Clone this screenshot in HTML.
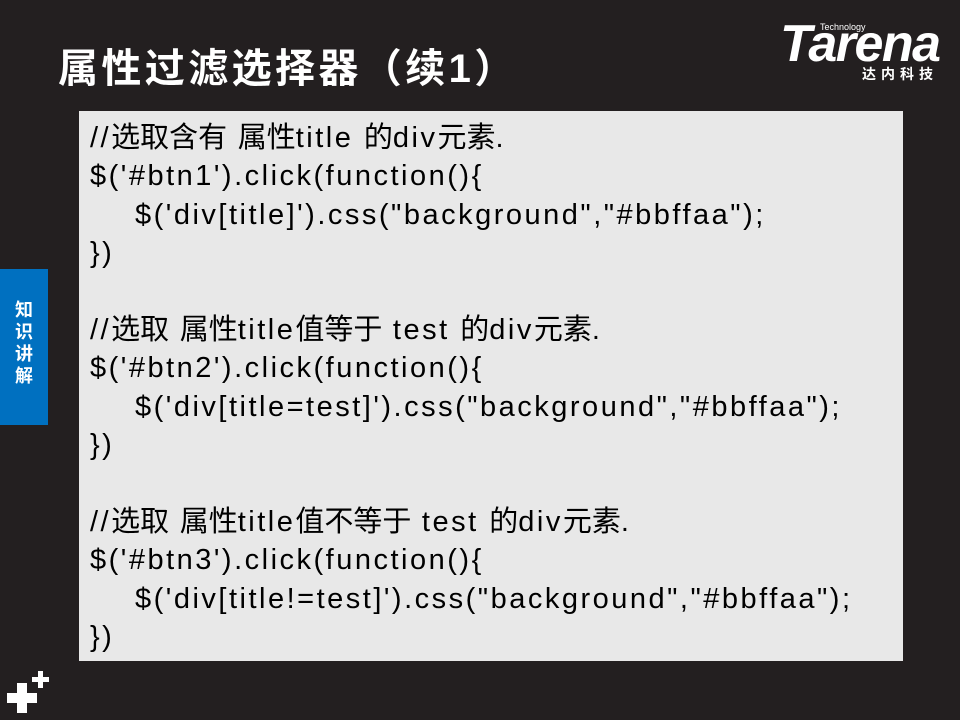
<!DOCTYPE html>
<html><head><meta charset="utf-8"><style>
body{margin:0;width:960px;height:720px;background:#231f20;position:relative;overflow:hidden;font-family:"Liberation Sans","Noto Sans CJK SC",sans-serif;}
.title{position:absolute;left:58px;top:36px;color:#fff;font-size:40px;font-weight:bold;letter-spacing:3.4px;}
.logo{position:absolute;left:780px;top:18px;color:#fff;}
.logo .t{font-size:52px;font-weight:bold;font-style:italic;letter-spacing:-1.5px;line-height:52px;}
.logo .tech{position:absolute;left:40px;top:4px;font-size:9px;}
.logo .cn{position:absolute;left:82px;top:46px;font-size:14px;font-weight:bold;letter-spacing:5px;white-space:nowrap;}
.side{position:absolute;left:0;top:269px;width:48px;height:156px;background:#0070c0;color:#fff;font-size:18px;font-weight:bold;text-align:center;line-height:22px;padding-top:30px;box-sizing:border-box;}
.code{position:absolute;left:79px;top:111px;width:824px;height:550px;background:#e8e8e8;}
.code div{position:absolute;left:11px;top:8px;font-family:"Liberation Sans","Noto Sans CJK SC",sans-serif;font-size:29px;line-height:38.4px;color:#000;letter-spacing:2.5px;white-space:pre;}
.i{padding-left:45px;}
.c{letter-spacing:0;}
</style></head><body>
<div class="title">属性过滤选择器（续1）</div>
<div class="logo"><span class="tech">Technology</span><div class="t">Tarena</div><div class="cn">达内科技</div></div>
<div class="side">知<br>识<br>讲<br>解</div>
<div class="code"><div>//<span class="c">选取含有</span> <span class="c">属性</span>title <span class="c">的</span>div<span class="c">元素</span>.
$('#btn1').click(function(){
<span class="i">$('div[title]').css("background","#bbffaa");</span>
})

//<span class="c">选取</span> <span class="c">属性</span>title<span class="c">值等于</span> test <span class="c">的</span>div<span class="c">元素</span>.
$('#btn2').click(function(){
<span class="i">$('div[title=test]').css("background","#bbffaa");</span>
})

//<span class="c">选取</span> <span class="c">属性</span>title<span class="c">值不等于</span> test <span class="c">的</span>div<span class="c">元素</span>.
$('#btn3').click(function(){
<span class="i">$('div[title!=test]').css("background","#bbffaa");</span>
})</div></div>
<svg style="position:absolute;left:0;top:660px" width="60" height="60"><path d="M7 38h30M22 23v30" stroke="#fff" stroke-width="10"/><path d="M32 19.5h17M40.5 11v17" stroke="#fff" stroke-width="5"/></svg>
</body></html>
